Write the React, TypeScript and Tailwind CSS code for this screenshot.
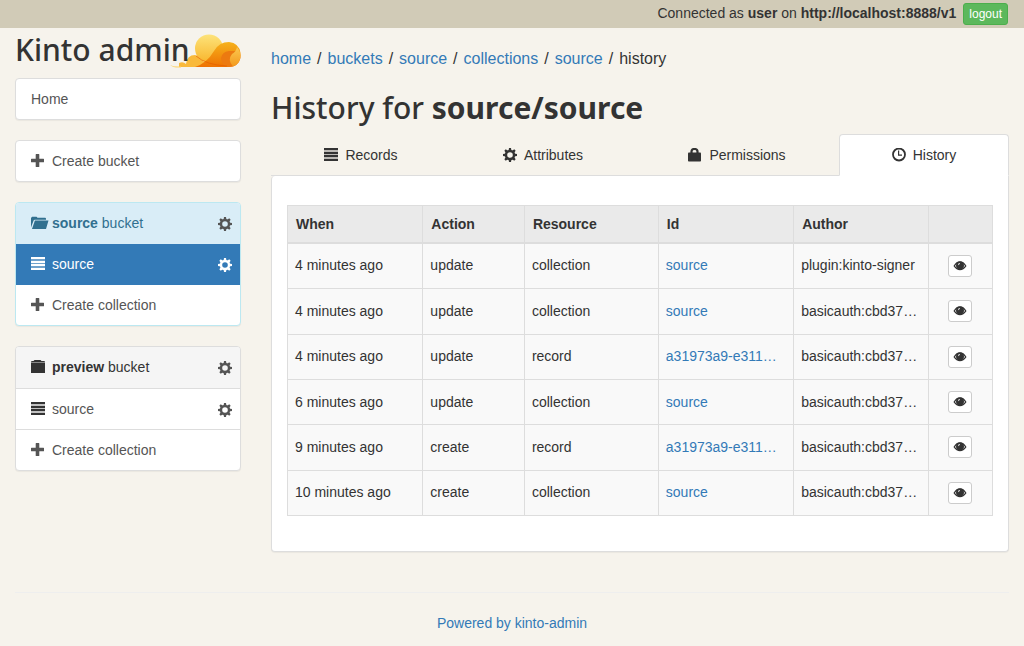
import React from "react";

type IconProps = { className?: string };

const iconBase = "inline-block size-[14px] shrink-0";

function ListIcon({ className = "" }: IconProps) {
  return (
    <svg viewBox="0 0 14 14" className={`${iconBase} ${className}`} fill="currentColor" aria-hidden="true">
      <rect x="0" y="0" width="14" height="13" opacity=".3" />
      <rect x="0" y="0" width="14" height="2" />
      <rect x="0" y="4" width="14" height="2" />
      <rect x="0" y="7" width="14" height="2" />
      <rect x="0" y="11" width="14" height="2" />
    </svg>
  );
}

function PlusIcon({ className = "" }: IconProps) {
  return (
    <svg viewBox="0 0 14 14" className={`${iconBase} ${className}`} fill="currentColor" aria-hidden="true">
      <path d="M5.200 0h2.600q.5 0 .5.5v4.300h4.200q.5 0 .5.5v2.400q0 .5-.5.5H8.300v4.300q0 .5-.5.5H5.200q-.5 0-.5-.5V8.200H.5Q0 8.200 0 7.700V5.300q0-.5.5-.5h4.200V.5q0-.5.5-.5z" />
    </svg>
  );
}

function CogIcon({ className = "" }: IconProps) {
  return (
    <svg viewBox="0 0 14 14" className={`${iconBase} ${className}`} fill="currentColor" aria-hidden="true">
      {[0, 45, 90, 135].map((angle) => (
        <g key={angle} transform={`rotate(${angle} 7 7)`}>
          <path d="M6 0h2l.5 3h-3zM6 14h2l.5-3h-3z" />
        </g>
      ))}
      <circle cx="7" cy="7" r="4" fill="none" stroke="currentColor" strokeWidth="2.400" />
    </svg>
  );
}

function FolderOpenIcon() {
  return (
    <svg viewBox="0 0 18 14" className="inline-block h-[14px] w-[18px] shrink-0" fill="currentColor" aria-hidden="true">
      <path d="M0 11.500V2L1 .8h4.500l1 1H14q1 0 1 1v1H3.800q-.9 0-1.200.8zM3.900 4.600H17.500L15 13H1z" />
    </svg>
  );
}

function FolderIcon() {
  return (
    <svg viewBox="0 0 14 14" className={iconBase} fill="currentColor" aria-hidden="true">
      <path d="M3.500 0H9.500l1 1H13q1 0 1 1.200H0Q0 1 1 1h1.500z" />
      <rect x="0" y="2" width="14" height="1.200" opacity=".4" />
      <path d="M0 3h14v9.500q0 .5-.5.5H.5q-.5 0-.5-.5z" />
    </svg>
  );
}

function LockIcon() {
  return (
    <svg viewBox="0 0 14 14" className={iconBase} fill="currentColor" aria-hidden="true">
      <path d="M3.500 6V3.500Q3.500 1 6.500 1t3 2.500V6" fill="none" stroke="currentColor" strokeWidth="2.200" />
      <rect x="0" y="4.500" width="13" height="9" rx=".8" />
    </svg>
  );
}

function ClockIcon() {
  return (
    <svg viewBox="0 0 14 14" className={iconBase} fill="none" stroke="currentColor" aria-hidden="true">
      <circle cx="7" cy="6.500" r="6" strokeWidth="1.800" />
      <path d="M6.600 2.500v4.600H10" strokeWidth="1.200" />
    </svg>
  );
}

function EyeIcon() {
  return (
    <svg viewBox="0 0 14 12" className="block h-[12px] w-[14px]" fill="none" stroke="currentColor" aria-hidden="true">
      <path d="M1.200 6Q3.700 1.900 7 1.900T12.800 6Q10.300 9.600 7 9.600T1.200 6z" strokeWidth="1.300" />
      <path fill="currentColor" stroke="none" fillRule="evenodd" d="M7 1.400a4 4 0 1 1 0 8 4 4 0 0 1 0-8zM6.600 3Q4.700 3.400 4.900 5.600q.6-1.500 2.100-1.600z" />
    </svg>
  );
}

function Logo() {
  return (
    <svg viewBox="0 0 76 34" className="absolute left-[150px] top-0 h-[34px] w-[76px]" aria-hidden="true">
      <defs>
        <linearGradient id="sun" x1="0" y1="0" x2="0" y2="1">
          <stop offset="0" stopColor="#fde37a" />
          <stop offset="1" stopColor="#f8b62d" />
        </linearGradient>
        <linearGradient id="wave" x1="0" y1="0" x2="0" y2="1">
          <stop offset="0" stopColor="#f6b21b" />
          <stop offset="1" stopColor="#ee7203" />
        </linearGradient>
        <linearGradient id="curl" x1="0" y1="0" x2="0" y2="1">
          <stop offset="0" stopColor="#fbc84f" />
          <stop offset="1" stopColor="#f39a1e" />
        </linearGradient>
      </defs>
      <circle cx="44" cy="14.500" r="14" fill="url(#sun)" />
      <path d="M14 33v-4q4-2 7 1 1-9 9-9 5 1 8 6l6 6z" fill="#f9b93a" />
      <path d="M30 33Q42 29 49 17q5-9 15-9 10 1 11.500 11Q75 33 63 33z" fill="url(#wave)" />
      <path d="M72 17q4 1 3.500 7-2 9-12.500 9-7-2-7-9 1-6 8-7z" fill="#ec7a10" />
      <path d="M72 13q4 5 3.500 10Q74 31 68 32.500 62 26 67 20q4-2 5-7z" fill="url(#curl)" />
      <path d="M31 22Q41 31 62 32" fill="none" stroke="#e25a00" strokeWidth="1" opacity=".6" />
      <path d="M5 31q4 2 11 1.500v1Q8 34 5 31z" fill="#fbd36b" />
    </svg>
  );
}

const panel = "rounded border border-[#ddd] bg-white shadow-[0_1px_1px_rgba(0,0,0,0.05)]";
const item = "flex h-10 items-center px-[15px] text-[#555]";
const heading = "font-['Noto_Sans','Open_Sans',sans-serif] text-[30px] font-medium";

function BucketPanel({ name, active = false }: { name: string; active?: boolean }) {
  return (
    <div className={`mb-5 overflow-hidden rounded border bg-white shadow-[0_1px_1px_rgba(0,0,0,0.05)] ${active ? "border-[#bce8f1]" : "border-[#ddd]"}`}>
      <div className={`flex items-center pb-[2px] pl-[15px] pr-2 ${active ? "h-[41px] bg-[#d9edf7] text-[#31708f]" : "h-[42px] border-b border-[#ddd] bg-[#f5f5f5] text-[#333]"}`}>
        <span className="flex w-[21px]">{active ? <FolderOpenIcon /> : <FolderIcon />}</span>
        <span className="grow"><b>{name}</b> bucket</span>
        <a href="#bucket" aria-label={`${name} bucket settings`} className="flex pt-[2px] text-[#555]"><CogIcon /></a>
      </div>
      <div className={`flex h-[41px] items-center pl-[15px] pr-2 ${active ? "bg-[#337ab7] pb-[2px] text-white" : "border-b border-[#ddd] text-[#555]"}`}>
        <a href="#collection" className="flex grow items-center">
          <span className={`flex w-[21px] ${active ? "" : "text-[#333]"}`}><ListIcon /></span>source
        </a>
        <a href="#settings" aria-label={`${name} collection settings`} className="flex pt-[2px]"><CogIcon /></a>
      </div>
      <a href="#create" className={item}>
        <span className="flex w-[21px]"><PlusIcon /></span>Create collection
      </a>
    </div>
  );
}

const crumbs = ["home", "buckets", "source", "collections", "source"];

const rows = [
  ["4 minutes ago", "update", "collection", "source", "plugin:kinto-signer"],
  ["4 minutes ago", "update", "collection", "source", "basicauth:cbd37…"],
  ["4 minutes ago", "update", "record", "a31973a9-e311…", "basicauth:cbd37…"],
  ["6 minutes ago", "update", "collection", "source", "basicauth:cbd37…"],
  ["9 minutes ago", "create", "record", "a31973a9-e311…", "basicauth:cbd37…"],
  ["10 minutes ago", "create", "collection", "source", "basicauth:cbd37…"],
];

const tab = "flex h-[42px] items-center justify-center gap-[7px] border-b text-[#333]";
const cell = "whitespace-nowrap border border-[#ddd] px-[7px] pb-px";

export default function App() {
  return (
    <div className="min-h-screen bg-[#f6f3ec] font-['Liberation_Sans',Arial,sans-serif] text-[14px] leading-5 text-[#333]">
      <header className="flex h-7 items-center justify-end gap-[7px] bg-[#d1cbb7] px-4">
        <span className="pb-[2px]">Connected as <b>user</b> on <b>http://localhost:8888/v1</b></span>
        <button type="button" className="h-[22px] rounded-[3px] border border-[#4cae4c] bg-[#5cb85c] px-[5px] text-[12px] leading-[18px] text-white">logout</button>
      </header>

      <div className="grid grid-cols-[1fr_3fr]">
        <aside className="px-[15px] pt-[6px]">
          <div className="relative mb-[10px] h-[34px]">
            <Logo />
            <h1 className={`relative whitespace-nowrap leading-8 ${heading}`}>Kinto admin</h1>
          </div>
          <nav aria-label="Buckets">
            <div className={`${panel} mb-5`}><a href="#home" className={item}>Home</a></div>
            <div className={`${panel} mb-5`}>
              <a href="#create-bucket" className={item}>
                <span className="flex w-[21px]"><PlusIcon /></span>Create bucket
              </a>
            </div>
            <BucketPanel name="source" active />
            <BucketPanel name="preview" />
          </nav>
        </aside>

        <main className="min-w-0 px-[15px] pt-5">
          <nav aria-label="Breadcrumb" className="text-[16px] leading-[22px]">
            {crumbs.map((crumb, i) => (
              <React.Fragment key={i}><a href={`#${crumb}`} className="text-[#337ab7]">{crumb}</a><span className="px-[6px]">/</span></React.Fragment>
            ))}
            history
          </nav>
          <h2 className={`mt-[18px] mb-[6px] leading-10 ${heading}`}>History for <b>source/source</b></h2>

          <div className="grid grid-cols-[180fr_184fr_204fr_170fr]">
            <a href="#records" className={`${tab} border-[#ddd]`}><ListIcon />Records</a>
            <a href="#attributes" className={`${tab} border-[#ddd]`}><CogIcon />Attributes</a>
            <a href="#permissions" className={`${tab} border-[#ddd]`}><LockIcon />Permissions</a>
            <a href="#history" aria-current="page" className={`${tab} rounded-t border-x border-t border-x-[#ddd] border-t-[#ddd] border-b-white bg-white`}><ClockIcon />History</a>
          </div>
          <section className="rounded-b rounded-tl border border-t-0 border-[#ddd] bg-white px-[15px] pt-[29px] pb-[35px] shadow-[0_1px_1px_rgba(0,0,0,0.05)]">
            <table className="h-[311px] w-full table-fixed border-collapse bg-[#f9f9f9]">
              <colgroup>
                <col className="w-[19.2%]" /><col className="w-[14.4%]" /><col className="w-[19%]" /><col className="w-[19.2%]" /><col className="w-[19.1%]" /><col />
              </colgroup>
              <thead>
                <tr className="h-[37px] bg-[#eaeaea] text-left">
                  {["When", "Action", "Resource", "Id", "Author"].map((h) => (
                    <th key={h} className="border border-b-2 border-[#ddd] px-2">{h}</th>
                  ))}
                  <th className="border border-b-2 border-[#ddd]" aria-label="Details" />
                </tr>
              </thead>
              <tbody>
                {rows.map((row, i) => (
                  <tr key={i}>
                    {row.map((value, j) => (
                      <td key={j} className={cell}>
                        {j === 3 ? <a href="#entry" className="text-[#337ab7]">{value}</a> : value}
                      </td>
                    ))}
                    <td className="border border-[#ddd]">
                      <button type="button" aria-label="View entry" className="mx-auto flex h-[22px] w-6 items-center justify-center rounded-[3px] border border-[#ccc] bg-white"><EyeIcon /></button>
                    </td>
                  </tr>
                ))}
              </tbody>
            </table>
          </section>
        </main>
      </div>

      <footer className="mx-[15px] mt-10 border-t border-[#eee] pt-5 pb-3 text-center">
        <a href="#kinto-admin" className="text-[#337ab7]">Powered by kinto-admin</a>
      </footer>
    </div>
  );
}
